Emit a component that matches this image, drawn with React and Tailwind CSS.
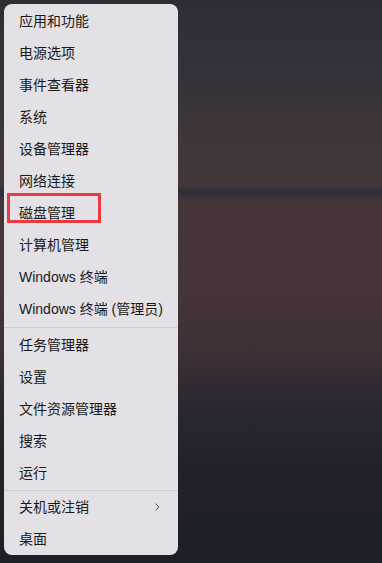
import React from "react";

const group1 = ["应用和功能","电源选项","事件查看器","系统","设备管理器","网络连接","磁盘管理","计算机管理","Windows 终端","Windows 终端 (管理员)"];
const group2 = ["任务管理器","设置","文件资源管理器","搜索","运行"];

function Row({ label, highlight, chevron }) {
  return (
    <div className="relative flex h-8 items-center justify-between pl-[15px] pr-[17px]">
      <span className="whitespace-nowrap text-[14px] leading-none text-[#1a1a1a]">{label}</span>
      {chevron && (
        <svg width="8" height="10" viewBox="0 0 8 10" className="text-[#555]">
          <path d="M2.5 1.5 L6 5 L2.5 8.5" fill="none" stroke="currentColor" strokeWidth="1" />
        </svg>
      )}
      {highlight && (
        <div className="absolute left-[3px] top-[-4px] h-[30px] w-[94px] border-[3px] border-[#ec3a40]" />
      )}
    </div>
  );
}

function Sep({ h }) {
  return (
    <div className={`flex items-center ${h}`}>
      <div className="h-px w-full bg-[#cfcdd2]" />
    </div>
  );
}

export default function App() {
  return (
    <div
      className="h-[563px] w-[382px] overflow-hidden bg-[linear-gradient(180deg,#2d2e35_0%,#34313a_12%,#3f3639_25%,#433739_33%,#303036_33.8%,#323036_34.6%,#45363a_35.6%,#463539_50%,#3e3037_62%,#2c2731_72%,#22222c_82%,#1c1e28_100%)] pl-[4px] pt-[4px]"
      style={{ fontFamily: '"Liberation Sans", "Noto Sans CJK SC", sans-serif' }}
    >
      <div className="w-[174px] rounded-[8px] bg-[#e3e1e6] pt-[1px]">
        {group1.map((l) => (
          <Row key={l} label={l} highlight={l === "磁盘管理"} />
        ))}
        <Sep h="h-[4px]" />
        {group2.map((l) => (
          <Row key={l} label={l} />
        ))}
        <Sep h="h-[2px]" />
        <Row label="关机或注销" chevron />
        <Row label="桌面" />
      </div>
    </div>
  );
}
